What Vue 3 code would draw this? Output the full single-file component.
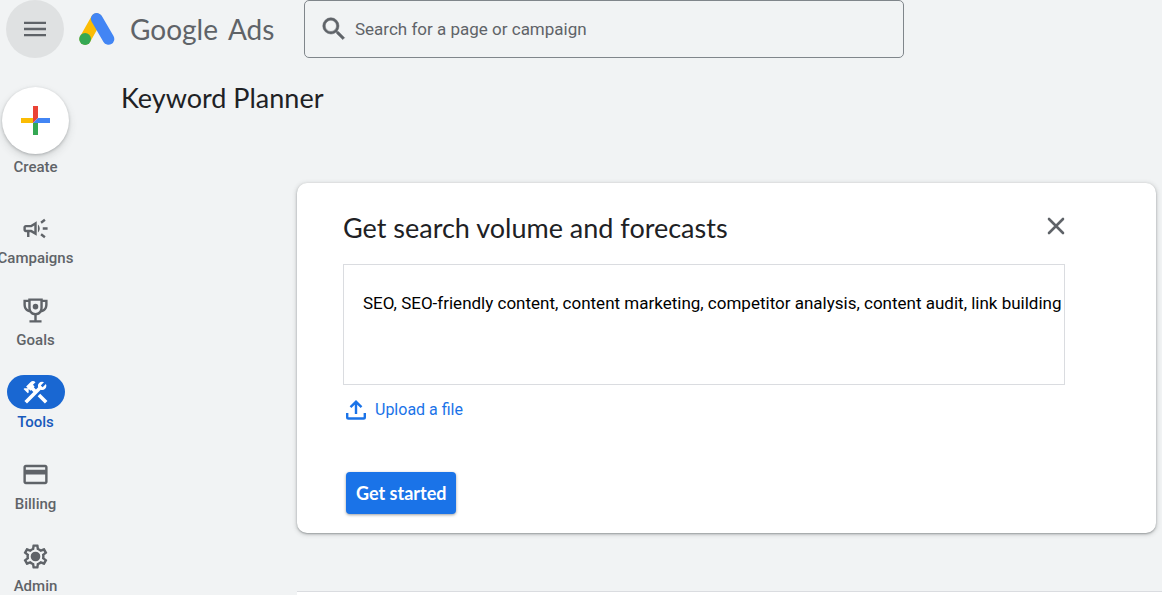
<script setup>
import { ref } from 'vue'

const search = ref('')
const keywords = ref('SEO, SEO-friendly content, content marketing, competitor analysis, content audit, link building')
const active = ref('Tools')

const navItems = [
  {
    label: 'Campaigns',
    path: 'M18 11v2h4v-2h-4zm-2 6.61c.96.71 2.21 1.65 3.2 2.39.4-.53.8-1.07 1.2-1.6-.99-.74-2.24-1.68-3.2-2.4-.4.54-.8 1.08-1.2 1.61zM20.4 5.6c-.4-.53-.8-1.07-1.2-1.6-.99.74-2.24 1.68-3.2 2.4.4.53.8 1.07 1.2 1.6.96-.72 2.21-1.65 3.2-2.4zM4 9c-1.1 0-2 .9-2 2v2c0 1.1.9 2 2 2h1v4h2v-4h1l5 3V6L8 9H4zm5.03 1.71L11 9.53v4.94l-1.97-1.18-.48-.29H4v-2h4.55l.48-.29zM15.5 12c0-1.33-.58-2.53-1.5-3.35v6.69c.92-.81 1.5-2.01 1.5-3.34z',
  },
  {
    label: 'Goals',
    path: 'M2 3h4V2h12v1h4v4c0 3.6-2 6-5.2 6.6-.8 1.3-2.1 2.2-3.8 2.4v4h4v2H7v-2h4v-4c-1.7-.2-3-1.1-3.8-2.4C4 13 2 10.6 2 7V3zm2 2v2c0 2 .8 3.5 2.3 4.2C6.1 10.7 6 10.1 6 9.5V5H4zm4-1v5.5C8 12.2 9.6 14 12 14s4-1.8 4-4.5V4H8zm10 1v4.5c0 .6-.1 1.2-.3 1.7C19.2 10.5 20 9 20 7V5h-2zM12 6.5a2.3 2.3 0 1 1 0 4.6 2.3 2.3 0 0 1 0-4.6z',
  },
  {
    label: 'Tools',
    path: 'm13.783 15.172 2.121-2.121 5.996 5.996-2.121 2.121zM17.5 10c1.93 0 3.5-1.57 3.5-3.5 0-.58-.16-1.12-.41-1.6l-2.7 2.7-1.49-1.49 2.7-2.7c-.48-.25-1.02-.41-1.6-.41C15.57 3 14 4.57 14 6.5c0 .41.08.8.21 1.16l-1.85 1.85-1.78-1.78.71-.71-1.41-1.41L12 3.49a3 3 0 0 0-4.24 0L4.22 7.03l1.41 1.41H2.81l-.71.71 3.54 3.54.71-.71V9.15l1.41 1.41.71-.71 1.78 1.78-7.41 7.41 2.12 2.12L16.34 9.79c.36.13.75.21 1.16.21z',
  },
  {
    label: 'Billing',
    path: 'M20 4H4c-1.11 0-1.99.89-1.99 2L2 18c0 1.11.89 2 2 2h16c1.11 0 2-.89 2-2V6c0-1.11-.89-2-2-2zm0 14H4v-6h16v6zm0-10H4V6h16v2z',
  },
  {
    label: 'Admin',
    path: 'M19.43 12.98c.04-.32.07-.64.07-.98 0-.34-.03-.66-.07-.98l2.11-1.65c.19-.15.24-.42.12-.64l-2-3.46c-.09-.16-.26-.25-.44-.25-.06 0-.12.01-.17.03l-2.49 1c-.52-.4-1.08-.73-1.69-.98l-.38-2.65C14.46 2.18 14.25 2 14 2h-4c-.25 0-.46.18-.49.42l-.38 2.65c-.61.25-1.17.59-1.69.98l-2.49-1c-.06-.02-.12-.03-.18-.03-.17 0-.34.09-.43.25l-2 3.46c-.13.22-.07.49.12.64l2.11 1.65c-.04.32-.07.65-.07.98 0 .33.03.66.07.98l-2.11 1.65c-.19.15-.24.42-.12.64l2 3.46c.09.16.26.25.44.25.06 0 .12-.01.17-.03l2.49-1c.52.4 1.08.73 1.69.98l.38 2.65c.03.24.24.42.49.42h4c.25 0 .46-.18.49-.42l.38-2.65c.61-.25 1.17-.59 1.69-.98l2.49 1c.06.02.12.03.18.03.17 0 .34-.09.43-.25l2-3.46c.12-.22.07-.49-.12-.64l-2.11-1.65zm-1.98-1.71c.04.31.05.52.05.73 0 .21-.02.43-.05.73l-.14 1.13.89.7 1.08.84-.7 1.21-1.27-.51-1.04-.42-.9.68c-.43.32-.84.56-1.25.73l-1.06.43-.16 1.13-.2 1.35h-1.4l-.19-1.35-.16-1.13-1.06-.43c-.43-.18-.83-.41-1.23-.71l-.91-.7-1.06.43-1.27.51-.7-1.21 1.08-.84.89-.7-.14-1.13c-.03-.31-.05-.54-.05-.74s.02-.43.05-.73l.14-1.13-.89-.7-1.08-.84.7-1.21 1.27.51 1.04.42.9-.68c.43-.32.84-.56 1.25-.73l1.06-.43.16-1.13.2-1.35h1.39l.19 1.35.16 1.13 1.06.43c.43.18.83.41 1.23.71l.91.7 1.06-.43 1.27-.51.7 1.21-1.07.85-.89.7.14 1.13zM12 8a4 4 0 1 1 0 8 4 4 0 0 1 0-8z',
  },
]
</script>

<template>
  <div class="app">
    <header class="topbar">
      <button class="menu-btn" aria-label="Main menu">
        <svg width="22" height="16" viewBox="0 0 22 16">
          <path d="M0 .7h22v2.4H0zM0 6.800h22v2.400H0zM0 12.900h22v2.400H0z" fill="#5f6368" />
        </svg>
      </button>
      <a class="brand" href="#">
        <svg width="36" height="33" viewBox="0 0 36 33">
          <path d="M17.5 6L6.2 26" stroke="#fbbc04" stroke-width="11.5" stroke-linecap="round" />
          <circle cx="6.1" cy="26" r="5.9" fill="#34a853" />
          <path d="M17.7 5.8L29.5 26" stroke="#4285f4" stroke-width="11.6" stroke-linecap="round" />
        </svg>
        <span class="google">Google</span>
        <span class="ads">Ads</span>
      </a>
      <label class="search">
        <svg width="30" height="30" viewBox="0 0 24 24">
          <path
            d="M15.5 14h-.79l-.28-.27A6.471 6.471 0 0 0 16 9.5 6.5 6.5 0 1 0 9.5 16c1.61 0 3.09-.59 4.23-1.57l.27.28v.79l5 4.99L20.49 19l-4.99-5zm-6 0C7.01 14 5 11.99 5 9.5S7.01 5 9.5 5 14 7.01 14 9.5 11.99 14 9.5 14z"
            fill="#5f6368"
            stroke="#5f6368"
            stroke-width=".4"
          />
        </svg>
        <input v-model="search" type="text" aria-label="Search" placeholder="Search for a page or campaign" />
      </label>
    </header>

    <div class="body">
      <nav class="sidebar">
        <button class="create">
          <span class="create-circle">
            <svg width="29" height="29" viewBox="0 0 29 29">
              <path d="M12 0h5v12l-5 5z" fill="#ea4335" />
              <path d="M0 12h12v5H0z" fill="#fbbc04" />
              <path d="M12 17h5v12h-5z" fill="#34a853" />
              <path d="M17 12h12v5H12z" fill="#4285f4" />
            </svg>
          </span>
          <span class="nav-label">Create</span>
        </button>
        <button
          v-for="item in navItems"
          :key="item.label"
          class="nav-item"
          :class="{ active: active === item.label }"
          @click="active = item.label"
        >
          <span class="pill">
            <svg width="29" height="29" viewBox="0 0 24 24">
              <path :d="item.path" fill="currentColor" fill-rule="evenodd" />
            </svg>
          </span>
          <span class="nav-label">{{ item.label }}</span>
        </button>
      </nav>

      <main class="content">
        <h1>Keyword Planner</h1>
        <section class="card">
          <div class="card-head">
            <h2>Get search volume and forecasts</h2>
            <button class="close" aria-label="Close">
              <svg width="18" height="18" viewBox="0 0 18 18">
                <path d="M2 2l14 14M16 2L2 16" stroke="#5f6368" stroke-width="2.6" stroke-linecap="round" />
              </svg>
            </button>
          </div>
          <textarea v-model="keywords" aria-label="Keywords"></textarea>
          <a class="upload" href="#">
            <svg width="20" height="20" viewBox="0 0 20 20" fill="none" stroke="#1a73e8" stroke-width="2.4">
              <path d="M10 14V2M4.5 7.2L10 1.8l5.5 5.4M1.2 13v4.2q0 1.3 1.3 1.3h15q1.3 0 1.3-1.3V13" />
            </svg>
            <span>Upload a file</span>
          </a>
          <button class="start">Get started</button>
        </section>
        <section class="next-panel"></section>
      </main>
    </div>
  </div>
</template>

<style>
body {
  background: #f1f3f4;
}
</style>

<style scoped>
.app {
  display: flex;
  flex-direction: column;
  min-height: 100vh;
  background: #f1f3f4;
  color: #202124;
  font-family: Roboto, "Liberation Sans", sans-serif;
}

button {
  border: none;
  padding: 0;
  background: none;
  font-family: inherit;
  cursor: pointer;
}

svg {
  display: block;
  flex-shrink: 0;
}

.topbar {
  display: flex;
  align-items: center;
  height: 58px;
  padding-left: 6px;
}

.menu-btn {
  display: flex;
  align-items: center;
  justify-content: center;
  width: 58px;
  height: 58px;
  border-radius: 50%;
  background: #dfe1e2;
}

.brand {
  display: flex;
  align-items: center;
  width: 225px;
  margin-left: 15px;
  color: #5f6368;
  font-family: Lato, sans-serif;
  font-size: 28px;
  line-height: 32px;
  text-decoration: none;
}

.google {
  margin-left: 15px;
}

.ads {
  margin-left: 10px;
}

.search {
  display: flex;
  align-items: center;
  flex: 0 1 600px;
  box-sizing: border-box;
  height: 58px;
  padding: 0 14px;
  border: 1px solid #80868b;
  border-radius: 5px;
}

.search input {
  flex: 1;
  min-width: 0;
  margin-left: 6px;
  padding: 0;
  border: none;
  outline: none;
  background: none;
  font: 17px Roboto, sans-serif;
}

.search input::placeholder {
  color: #5f6368;
  opacity: 1;
}

.body {
  display: flex;
  flex: 1;
}

.sidebar {
  display: flex;
  flex-direction: column;
  align-items: center;
  flex-shrink: 0;
  gap: 26px;
  box-sizing: border-box;
  width: 71px;
  padding-top: 29px;
}

.create,
.nav-item {
  display: flex;
  flex-direction: column;
  align-items: center;
  gap: 4px;
  color: #5f6368;
}

.create {
  margin-bottom: 9px;
}

.create-circle {
  display: flex;
  align-items: center;
  justify-content: center;
  width: 67px;
  height: 67px;
  border-radius: 50%;
  background: #fff;
  box-shadow: 0 1px 3px rgba(60, 64, 67, 0.3), 0 4px 8px rgba(60, 64, 67, 0.15);
}

.pill {
  display: flex;
  align-items: center;
  justify-content: center;
  width: 58px;
  height: 34px;
  border-radius: 17px;
}

.nav-label {
  font-size: 15px;
  font-weight: 500;
  line-height: 18px;
}

.active .pill {
  background: #1967d2;
  color: #fff;
}

.active .nav-label {
  color: #185abc;
}

.content {
  display: flex;
  flex-direction: column;
  flex: 1;
  min-width: 0;
}

h1,
h2 {
  margin: 0;
  font-family: Lato, sans-serif;
  font-size: 27px;
  font-weight: 400;
  line-height: 32px;
}

h1 {
  margin: 24px 0 69px 50px;
}

.card {
  margin: 0 6px 58px 226px;
  padding: 29px 91px 19px 46px;
  border-radius: 10px;
  background: #fff;
  box-shadow: 0 1px 2px rgba(60, 64, 67, 0.4), 0 1px 4px 1px rgba(60, 64, 67, 0.18);
}

.card-head {
  display: flex;
  justify-content: space-between;
  align-items: flex-start;
  margin-bottom: 20px;
}

.close {
  padding: 5px 0;
}

textarea {
  display: block;
  box-sizing: border-box;
  width: 100%;
  height: 121px;
  padding: 26px 0 0 19px;
  border: 1px solid #dadce0;
  outline: none;
  resize: none;
  color: #000;
  font: 17px/24px Roboto, sans-serif;
}

.upload {
  display: flex;
  align-items: center;
  gap: 9px;
  width: fit-content;
  margin: 13px 0 50px 3px;
  color: #1a73e8;
  font-size: 16px;
  line-height: 24px;
  text-decoration: none;
}

.start {
  height: 42px;
  margin-left: 3px;
  padding: 0 10px;
  border-radius: 4px;
  background: #1a73e8;
  color: #fff;
  font-family: Lato, sans-serif;
  font-size: 18px;
  font-weight: 700;
  box-shadow: 0 1px 3px rgba(60, 64, 67, 0.5);
}

.next-panel {
  flex: 1;
  margin-left: 226px;
  border-top: 1px solid #dadce0;
  background: #fff;
}
</style>
